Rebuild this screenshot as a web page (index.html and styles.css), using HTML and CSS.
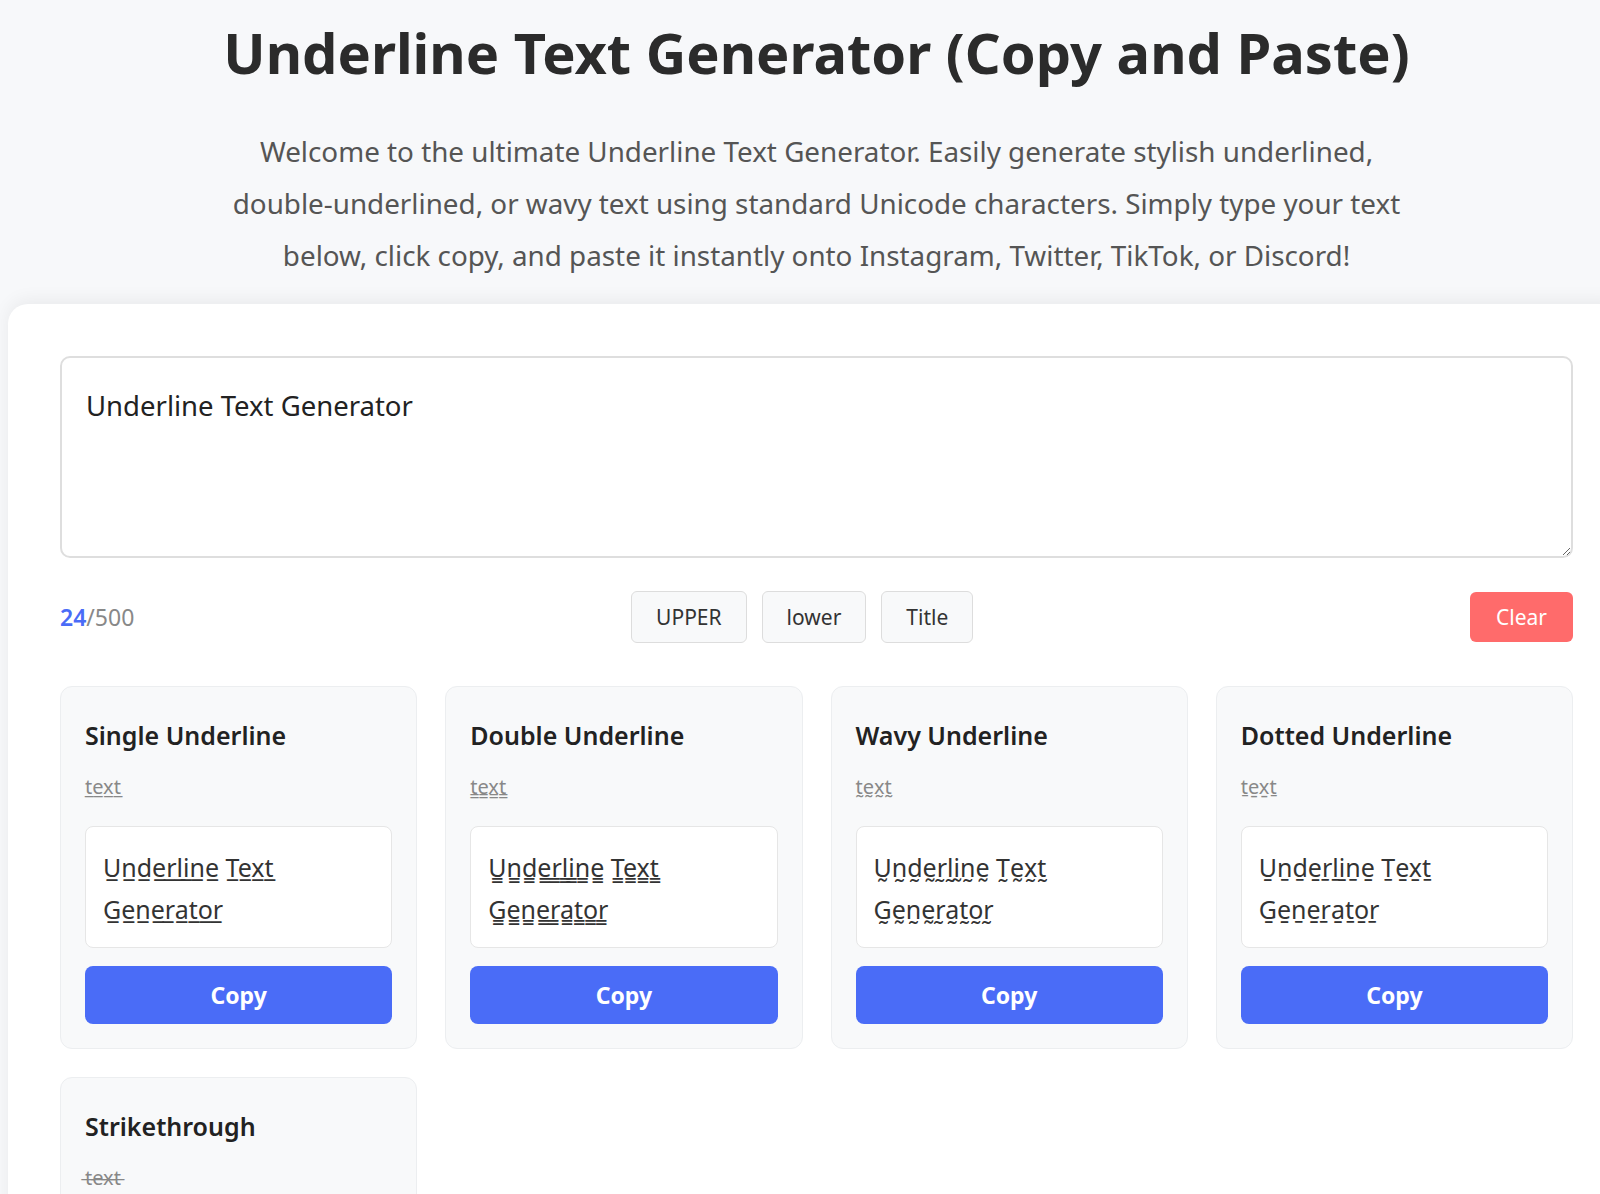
FILE: index.html
```html
<!DOCTYPE html>
<html lang="en">
<head>
    <meta charset="UTF-8">
    <meta name="viewport" content="width=device-width, initial-scale=1.0">
    <title>Underline Text Generator (Copy and Paste)</title>
    <link rel="stylesheet" href="styles.css">
</head>
<body>
    <div class="page">
        <header>
            <h1>Underline Text Generator (Copy and Paste)</h1>
            <p class="intro">Welcome to the ultimate Underline Text Generator. Easily generate stylish underlined, double-underlined, or wavy text using standard Unicode characters. Simply type your text below, click copy, and paste it instantly onto Instagram, Twitter, TikTok, or Discord!</p>
        </header>

        <main class="tool">
            <textarea id="input" maxlength="500">Underline Text Generator</textarea>

            <div class="controls">
                <div class="counter"><span id="count">24</span>/500</div>
                <div class="case-buttons">
                    <button class="case-btn" onclick="setCase('upper')">UPPER</button>
                    <button class="case-btn" onclick="setCase('lower')">lower</button>
                    <button class="case-btn" onclick="setCase('title')">Title</button>
                </div>
                <button class="clear-btn" onclick="clearText()">Clear</button>
            </div>

            <div class="styles">
                <div class="style-card" data-mark="&#x332;">
                    <h3>Single Underline</h3>
                    <div class="sample"></div>
                    <div class="output"></div>
                    <button class="copy-btn" onclick="copyOut(this)">Copy</button>
                </div>
                <div class="style-card" data-mark="&#x333;">
                    <h3>Double Underline</h3>
                    <div class="sample"></div>
                    <div class="output"></div>
                    <button class="copy-btn" onclick="copyOut(this)">Copy</button>
                </div>
                <div class="style-card" data-mark="&#x330;">
                    <h3>Wavy Underline</h3>
                    <div class="sample"></div>
                    <div class="output"></div>
                    <button class="copy-btn" onclick="copyOut(this)">Copy</button>
                </div>
                <div class="style-card" data-mark="&#x331;">
                    <h3>Dotted Underline</h3>
                    <div class="sample"></div>
                    <div class="output"></div>
                    <button class="copy-btn" onclick="copyOut(this)">Copy</button>
                </div>
                <div class="style-card" data-mark="&#x336;">
                    <h3>Strikethrough</h3>
                    <div class="sample"></div>
                    <div class="output"></div>
                    <button class="copy-btn" onclick="copyOut(this)">Copy</button>
                </div>
            </div>
        </main>
    </div>

    <script>
        let input = document.getElementById('input');

        function decorate(text, mark) {
            return Array.from(text).map(ch => ch === ' ' || ch === '\n' ? ch : ch + mark).join('');
        }

        function update() {
            document.getElementById('count').textContent = input.value.length;
            document.querySelectorAll('.style-card').forEach(card => {
                let mark = card.getAttribute('data-mark');
                card.querySelector('.sample').textContent = decorate('text', mark);
                card.querySelector('.output').textContent = decorate(input.value, mark);
            });
        }

        function setCase(mode) {
            let v = input.value;
            if (mode === 'upper') v = v.toUpperCase();
            if (mode === 'lower') v = v.toLowerCase();
            if (mode === 'title') v = v.toLowerCase().replace(/\b\w/g, c => c.toUpperCase());
            input.value = v;
            update();
        }

        function clearText() {
            input.value = '';
            update();
        }

        function copyOut(button) {
            let text = button.closest('.style-card').querySelector('.output').textContent;
            navigator.clipboard.writeText(text);
            button.textContent = 'Copied!';
            setTimeout(() => button.textContent = 'Copy', 1500);
        }

        input.addEventListener('input', update);
        update();
    </script>
</body>
</html>
```

FILE: styles.css
```css
html {
    overflow-x: hidden;
}

body {
    margin: 0;
    background-color: #f7f8fa;
    color: #333;
    font-family: "Noto Sans", "Open Sans", sans-serif;
}

.page {
    width: 1617px;
    margin-left: 8px;
}

header {
    text-align: center;
    padding-top: 17px;
}

header h1 {
    margin: 0;
    font-size: 56px;
    line-height: 70px;
    font-weight: 700;
    color: #2b2b2b;
}

.intro {
    max-width: 1180px;
    margin: 38px auto 23px;
    font-size: 27.8px;
    line-height: 52px;
    color: #555;
}

.tool {
    background-color: #fff;
    border-radius: 20px 20px 0 0;
    box-shadow: 0 -4px 18px rgba(0, 0, 0, 0.06);
    padding: 52px;
}

textarea {
    display: block;
    box-sizing: border-box;
    width: 100%;
    height: 202px;
    padding: 29px 24px 20px;
    border: 2px solid #dedede;
    border-radius: 10px;
    font-family: inherit;
    font-size: 27.5px;
    color: #222;
    resize: vertical;
    outline: none;
}

.controls {
    display: flex;
    justify-content: space-between;
    align-items: center;
    margin-top: 33px;
    height: 52px;
}

.counter {
    font-size: 23px;
    color: #888;
}

.counter span {
    color: #4a6cf7;
    font-weight: 600;
}

.case-buttons {
    display: flex;
    gap: 15px;
}

.case-btn {
    height: 52px;
    padding: 0 24px;
    background-color: #f8f9fa;
    border: 1px solid #ddd;
    border-radius: 6px;
    font-family: inherit;
    font-size: 21px;
    color: #333;
    cursor: pointer;
}

.clear-btn {
    height: 50px;
    padding: 0 26px;
    background-color: #ff6b6b;
    border: none;
    border-radius: 6px;
    font-family: inherit;
    font-size: 21px;
    color: #fff;
    cursor: pointer;
}

.styles {
    display: grid;
    grid-template-columns: repeat(4, 1fr);
    gap: 28px;
    margin-top: 43px;
}

.style-card {
    background-color: #f8f9fa;
    border: 1px solid #eceef0;
    border-radius: 12px;
    padding: 24px;
}

.style-card h3 {
    margin: 8px 0 0;
    font-size: 25px;
    line-height: 32px;
    font-weight: 600;
    color: #222;
}

.sample {
    margin-top: 20px;
    font-size: 20px;
    line-height: 32px;
    color: #888;
}

.output {
    margin-top: 23px;
    min-height: 84px;
    padding: 19px 17px 17px;
    background-color: #fff;
    border: 1px solid #e6e6e6;
    border-radius: 8px;
    font-size: 25px;
    line-height: 42px;
    color: #333;
    word-wrap: break-word;
}

.copy-btn {
    display: block;
    width: 100%;
    height: 58px;
    margin-top: 18px;
    background-color: #4a6cf7;
    border: none;
    border-radius: 8px;
    font-family: inherit;
    font-size: 23px;
    font-weight: 700;
    color: #fff;
    cursor: pointer;
}
```
